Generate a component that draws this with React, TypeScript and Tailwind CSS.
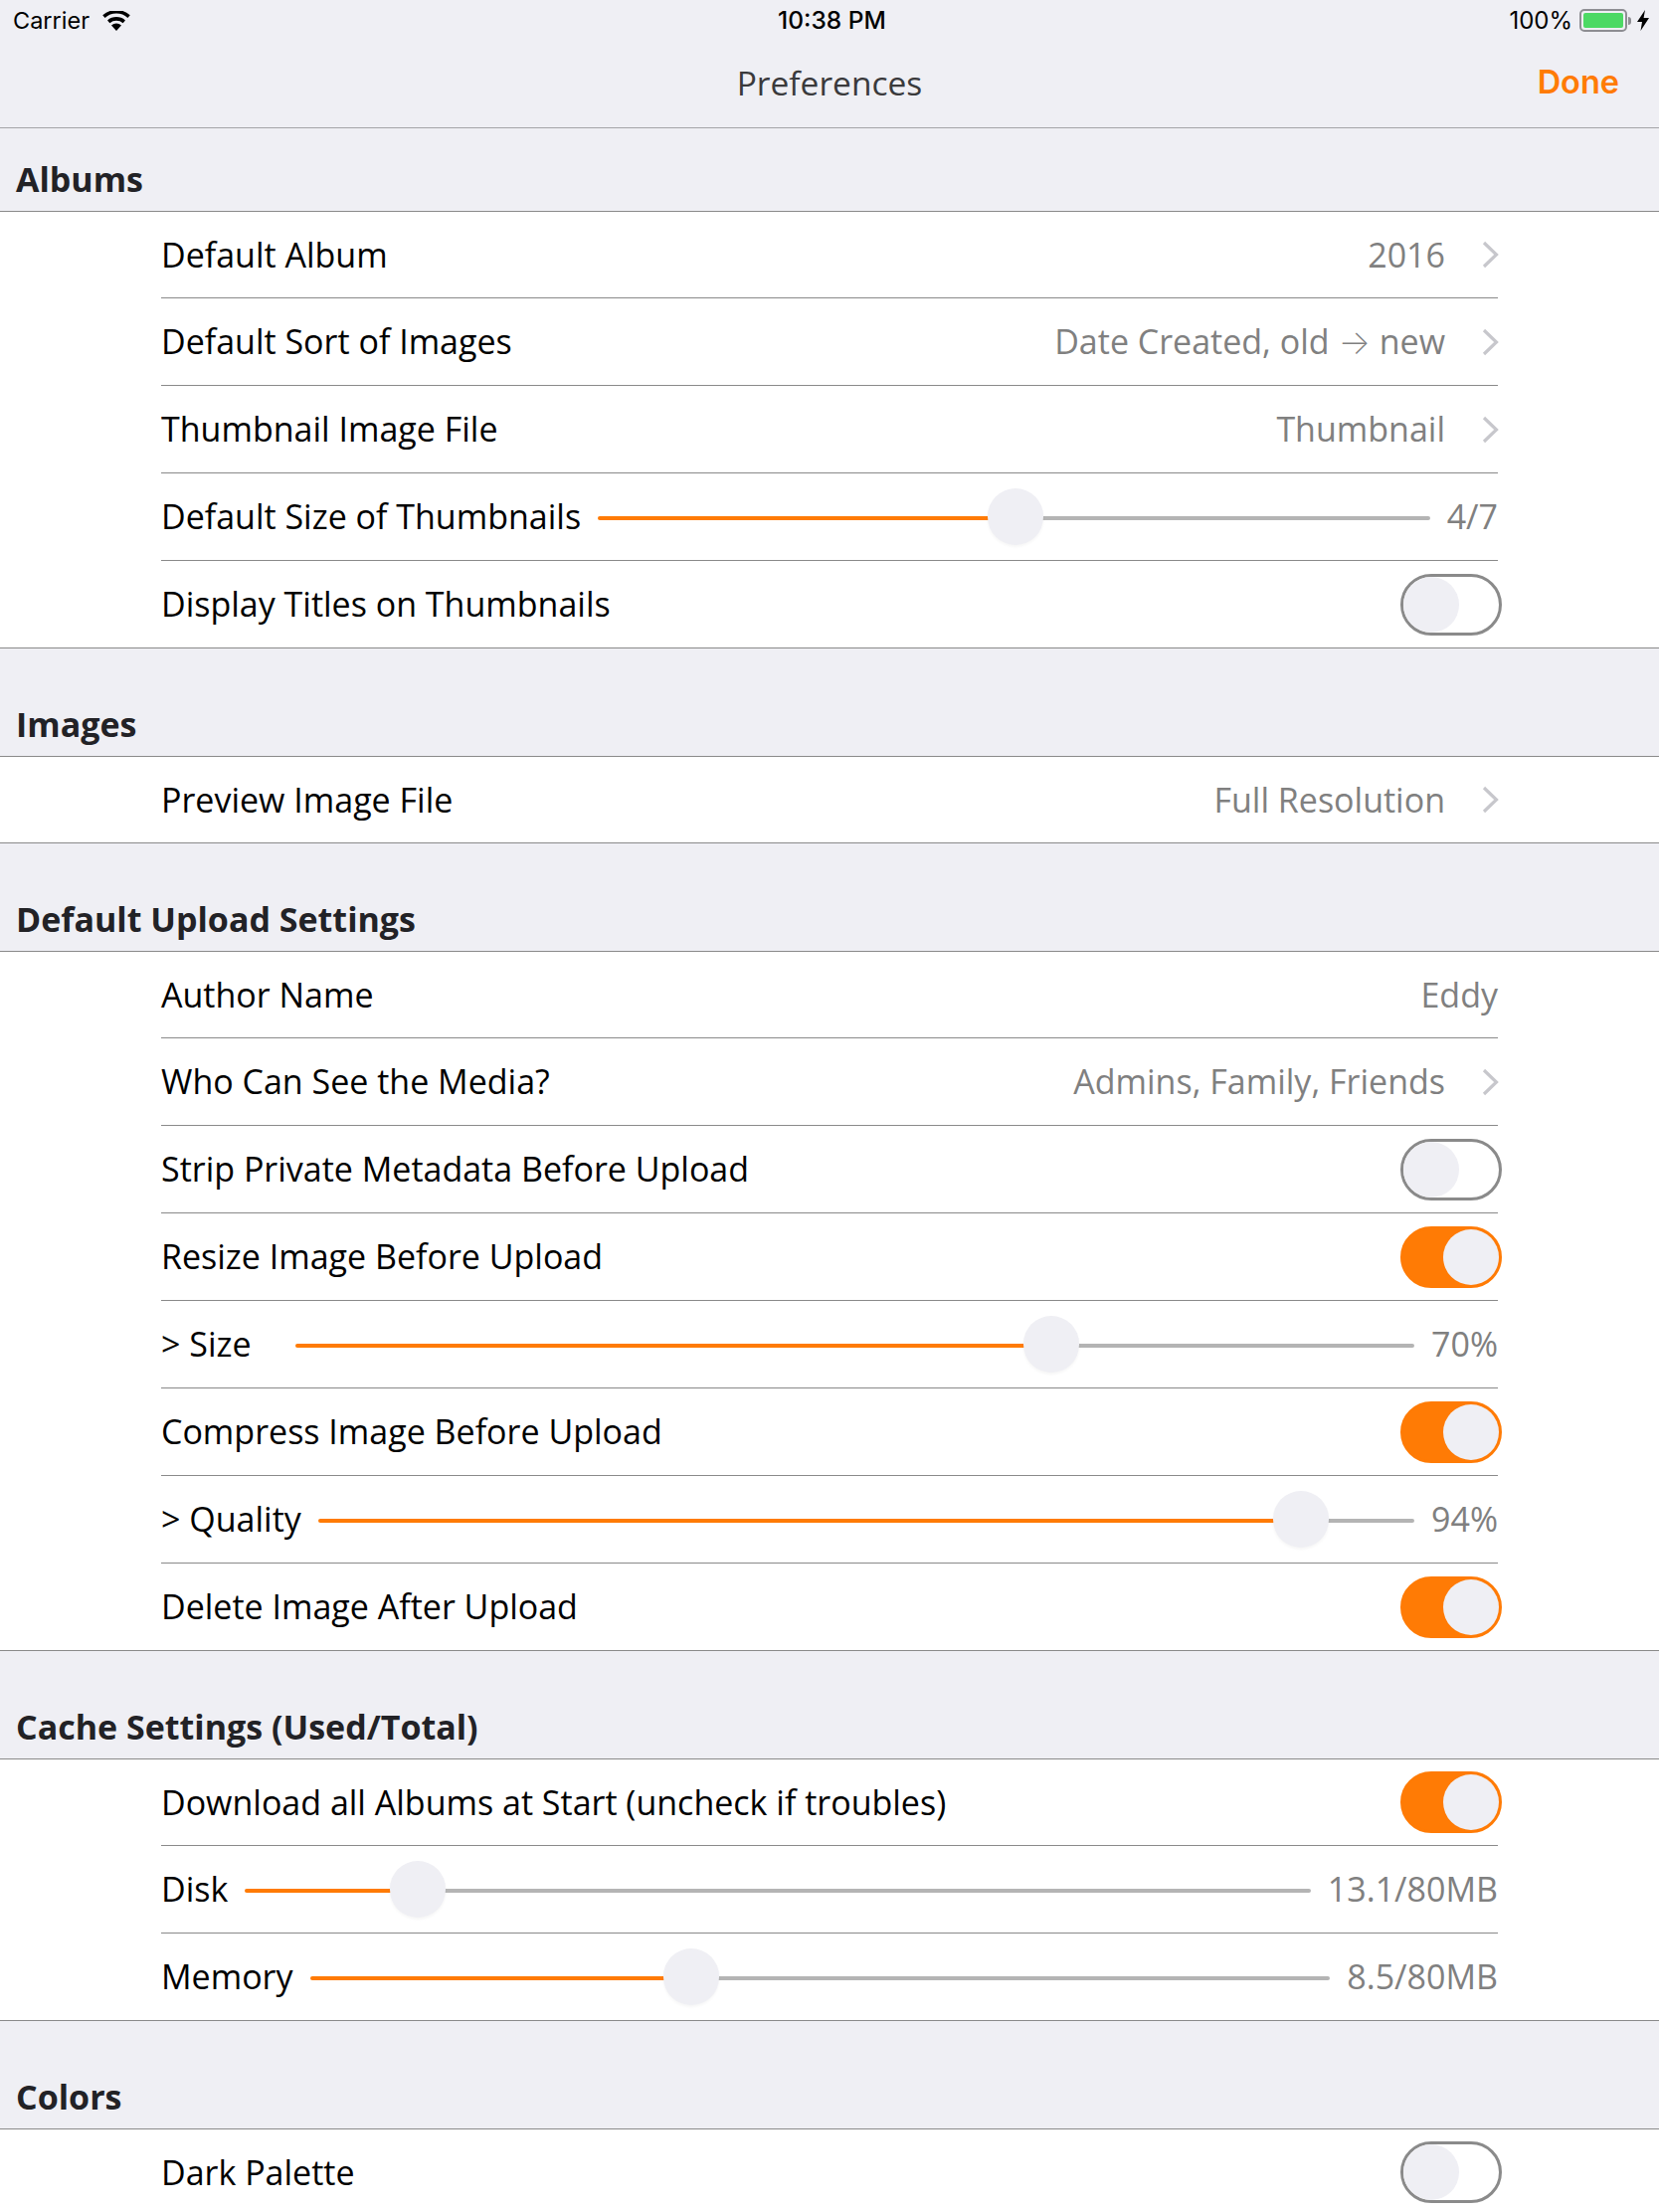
import React from 'react';

const sans = "font-['Open_Sans',sans-serif]";

const Toggle: React.FC<{ on?: boolean }> = ({ on }) => (
    <div className={`relative h-[62px] w-[102px] shrink-0 -mr-[4px] rounded-full border-[3px] ${on ? 'border-[#ff7b05] bg-[#ff7b05]' : 'border-[#8a8a8a] bg-white'}`}>
        <div className={`absolute top-0 h-[56px] w-[56px] rounded-full bg-[#efeff4] ${on ? 'right-0' : 'left-0'}`} />
    </div>
);

const Slider: React.FC<{ pct: number }> = ({ pct }) => (
    <div className="relative flex h-[57px] min-w-0 flex-1 items-center pt-[3px]">
        <div className="h-[4px] rounded-l-full bg-[#ff7b05]" style={{ width: `${pct * 100}%` }} />
        <div className="h-[4px] flex-1 rounded-r-full bg-[#b4b4b4]" />
        <div
            className="absolute top-0 h-[57px] w-[56px] rounded-full bg-[#efeff4] shadow-[0_2px_3px_rgba(0,0,0,0.04)]"
            style={{ left: `calc((100% - 56px) * ${pct})` }}
        />
    </div>
);

const Chevron = () => (
    <svg className="ml-[37px] -mr-[1px] shrink-0" width="17" height="28" viewBox="0 0 17 28" fill="none">
        <path d="M2 2l12.5 12L2 26" stroke="#c7c7cc" strokeWidth="3.2" />
    </svg>
);

// first row of a group is 1px shorter, last row has the full-width rule
const Row: React.FC<{ children: React.ReactNode; last?: boolean }> = ({ children, last }) => (
    <div className={`h-[88px] bg-white pl-[162px] first:h-[87px] ${last ? 'border-b border-[#8a8a8a]' : ''}`}>
        <div className={`mr-[162px] flex h-full items-center text-[34px] text-black ${last ? '' : 'border-b border-[#8a8a8a]'}`}>
            {children}
        </div>
    </div>
);

const NavRow: React.FC<{ label: string; value: React.ReactNode; last?: boolean }> = ({ label, value, last }) => (
    <Row last={last}>
        <span className="flex-1">{label}</span>
        <span className="text-[#808080]">{value}</span>
        <Chevron />
    </Row>
);

const SliderRow: React.FC<{ label: string; value: string; pct: number; wide?: boolean; last?: boolean }> = ({ label, value, pct, wide, last }) => (
    <Row last={last}>
        <span className={wide ? 'mr-[44px]' : 'mr-[17px]'}>{label}</span>
        <Slider pct={pct} />
        <span className="ml-[17px] text-[#808080]">{value}</span>
    </Row>
);

const ToggleRow: React.FC<{ label: string; on?: boolean; last?: boolean }> = ({ label, on, last }) => (
    <Row last={last}>
        <span className="flex-1">{label}</span>
        <Toggle on={on} />
    </Row>
);

const Section: React.FC<{ title: string; first?: boolean; children: React.ReactNode }> = ({ title, first, children }) => (
    <section>
        <div className={`flex items-end border-b border-[#8a8a8a] pb-[6px] pl-[16px] text-[34px] font-bold text-[#222226] ${first ? 'h-[84px]' : 'h-[109px]'}`}>
            {title}
        </div>
        <div>{children}</div>
    </section>
);

export default function App() {
    return (
        <div className={`h-[2224px] overflow-hidden bg-[#efeff4] ${sans}`}>
            <div className="relative flex h-[40px] items-center justify-between pl-[13px] pr-[10px] pt-[1px] font-['Inter',sans-serif] text-[23.5px] text-black">
                <div className="flex items-center gap-[13px]">
                    <span>Carrier</span>
                    <svg width="28" height="20" viewBox="0 0 28 20" fill="none">
                        <path d="M14 20l-5-5.6a7.4 7.4 0 0 1 10 0z" fill="#000" />
                        <path d="M6.2 10.8a12 12 0 0 1 15.6 0" stroke="#000" strokeWidth="3.6" />
                        <path d="M1.4 5.6a19 19 0 0 1 25.2 0" stroke="#000" strokeWidth="3.6" />
                    </svg>
                </div>
                <span className="absolute left-[782px] text-[24.5px] font-medium">10:38 PM</span>
                <div className="flex items-center">
                    <span className="text-[24px]">100%</span>
                    <div className="ml-[7px] h-[23px] w-[48px] rounded-[5px] border-2 border-[#8e8e93] p-[2px]">
                        <div className="h-full w-full rounded-[2px] bg-[#4cd964]" />
                    </div>
                    <div className="ml-[1px] h-[8px] w-[3px] rounded-r-full bg-[#8e8e93]" />
                    <svg className="ml-[6px]" width="12" height="21" viewBox="0 0 12 21">
                        <path d="M8 0L0 12h5L3.5 21 12 8H6.6z" fill="#000" />
                    </svg>
                </div>
            </div>
            <div className="relative flex h-[89px] items-center justify-center border-b border-[#a4a4a8] pb-[1px] text-[33.5px] text-[#3a3a3c]">
                <span>Preferences</span>
                <span className="absolute right-[40px] font-['Inter',sans-serif] text-[32.5px] font-semibold text-[#ff7b05]">Done</span>
            </div>

            <Section title="Albums" first>
                <NavRow label="Default Album" value="2016" />
                <NavRow
                    label="Default Sort of Images"
                    value={<>Date Created, old <span className="font-['Inter',sans-serif] font-extralight">→</span> new</>}
                />
                <NavRow label="Thumbnail Image File" value="Thumbnail" />
                <SliderRow label="Default Size of Thumbnails" value="4/7" pct={0.502} />
                <ToggleRow label="Display Titles on Thumbnails" last />
            </Section>

            <Section title="Images">
                <NavRow label="Preview Image File" value="Full Resolution" last />
            </Section>

            <Section title="Default Upload Settings">
                <Row>
                    <span className="flex-1">Author Name</span>
                    <span className="text-[#808080]">Eddy</span>
                </Row>
                <NavRow label="Who Can See the Media?" value="Admins, Family, Friends" />
                <ToggleRow label="Strip Private Metadata Before Upload" />
                <ToggleRow label="Resize Image Before Upload" on />
                <SliderRow label="> Size" value="70%" pct={0.685} wide />
                <ToggleRow label="Compress Image Before Upload" on />
                <SliderRow label="> Quality" value="94%" pct={0.918} />
                <ToggleRow label="Delete Image After Upload" on last />
            </Section>

            <Section title="Cache Settings (Used/Total)">
                <ToggleRow label="Download all Albums at Start (uncheck if troubles)" on />
                <SliderRow label="Disk" value="13.1/80MB" pct={0.143} />
                <SliderRow label="Memory" value="8.5/80MB" pct={0.367} last />
            </Section>

            <Section title="Colors">
                <ToggleRow label="Dark Palette" last />
            </Section>
        </div>
    );
}
